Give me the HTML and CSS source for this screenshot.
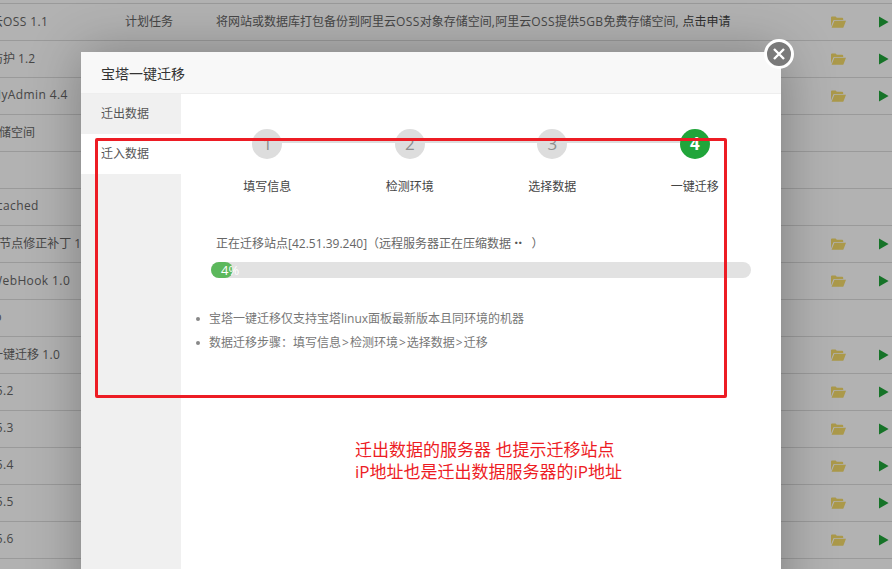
FILE: index.html
```html
<!DOCTYPE html>
<html lang="zh-CN">
<head>
<meta charset="utf-8">
<title>宝塔一键迁移</title>
<link rel="stylesheet" href="styles.css">
</head>
<body>
<svg class="defs" width="0" height="0" aria-hidden="true">
  <symbol id="folder" viewBox="0 0 15 12">
    <path d="M0 10.5V1.6Q0 .6 1 .6H4.6L5.8 1.8H11.2Q12.2 1.8 12.2 2.8V4H3.2Q2.6 4 2.3 4.6Z"/>
    <path d="M3.4 4.8H15L12.4 11.4Q12.2 11.8 11.7 11.8H.6Z"/>
  </symbol>
  <symbol id="play" viewBox="0 0 10 12">
    <path d="M0 .4 9.6 6 0 11.6Z"/>
  </symbol>
</svg>
<main class="page">
  <div class="list">
    <div class="row"><span>阿里云<b class="lat">OSS 1.1</b></span><span class="cell">计划任务</span><span class="cell">将网站或数据库打包备份到阿里云<b class="lat">OSS</b>对象存储空间<b class="lat">,</b>阿里云<b class="lat">OSS</b>提供<b class="lat">5GB</b>免费存储空间<b class="lat">, </b><a class="apply">点击申请</a></span><svg class="folder"><use href="#folder"/></svg><svg class="play"><use href="#play"/></svg></div>
    <div class="row"><span>网站防护 1.2</span><span></span><span></span><svg class="folder"><use href="#folder"/></svg><svg class="play"><use href="#play"/></svg></div>
    <div class="row"><span><b class="lat">phpMyAdmin 4.4</b></span><span></span><span></span><svg class="folder"><use href="#folder"/></svg><svg class="play"><use href="#play"/></svg></div>
    <div class="row"><span>FTP存储空间</span></div>
    <div class="row"></div>
    <div class="row"><span><b class="lat">Memcached</b></span></div>
    <div class="row"><span>Nginx节点修正补丁 1.0</span><span></span><span></span><svg class="folder"><use href="#folder"/></svg><svg class="play"><use href="#play"/></svg></div>
    <div class="row"><span>宝塔<b class="lat">WebHook 1.0</b></span><span></span><span></span><svg class="folder"><use href="#folder"/></svg><svg class="play"><use href="#play"/></svg></div>
    <div class="row"><span>Dump</span></div>
    <div class="row"><span>宝塔一键迁移 <b class="lat">1.0</b></span><span></span><span></span><svg class="folder"><use href="#folder"/></svg><svg class="play"><use href="#play"/></svg></div>
    <div class="row"><span><b class="lat">PHP-5.2</b></span><span></span><span></span><svg class="folder"><use href="#folder"/></svg><svg class="play"><use href="#play"/></svg></div>
    <div class="row"><span><b class="lat">PHP-5.3</b></span><span></span><span></span><svg class="folder"><use href="#folder"/></svg><svg class="play"><use href="#play"/></svg></div>
    <div class="row"><span><b class="lat">PHP-5.4</b></span><span></span><span></span><svg class="folder"><use href="#folder"/></svg><svg class="play"><use href="#play"/></svg></div>
    <div class="row"><span><b class="lat">PHP-5.5</b></span><span></span><span></span><svg class="folder"><use href="#folder"/></svg><svg class="play"><use href="#play"/></svg></div>
    <div class="row"><span><b class="lat">PHP-5.6</b></span><span></span><span></span><svg class="folder"><use href="#folder"/></svg><svg class="play"><use href="#play"/></svg></div>
    <div class="row"></div>
  </div>

  <div class="shade"></div>

  <section class="modal">
    <header class="modal-title">宝塔一键迁移</header>
    <div class="modal-body">
      <nav class="side">
        <div class="side-item">迁出数据</div>
        <div class="side-item active">迁入数据</div>
      </nav>
      <div class="content">
        <ol class="steps">
          <li class="step"><span class="num">1</span><span class="label">填写信息</span></li>
          <li class="step"><span class="num">2</span><span class="label">检测环境</span></li>
          <li class="step"><span class="num">3</span><span class="label">选择数据</span></li>
          <li class="step current"><span class="num">4</span><span class="label">一键迁移</span></li>
        </ol>
        <p class="status">正在迁移站点[42.51.39.240]（远程服务器正在压缩数据 <b class="dots">··</b>&nbsp;&nbsp;&nbsp;）</p>
        <div class="bar"><div class="fill" style="width:4%">4%</div></div>
        <ul class="tips">
          <li>宝塔一键迁移仅支持宝塔linux面板最新版本且同环境的机器</li>
          <li>数据迁移步骤：填写信息<b class="gt">&gt;</b>检测环境<b class="gt">&gt;</b>选择数据<b class="gt">&gt;</b>迁移</li>
        </ul>
      </div>
    </div>
  </section>

  <button class="close" aria-label="关闭">
    <svg width="14" height="14" viewBox="0 0 14 14"><path d="M2 2 12 12M12 2 2 12"/></svg>
  </button>

  <div class="mark-box"></div>
  <p class="mark-note">迁出数据的服务器 也提示迁移站点<br>iP地址也是迁出数据服务器的iP地址</p>
</main>
</body>
</html>
```
FILE: styles.css
```css
* { box-sizing: border-box; }
html, body { margin: 0; padding: 0; }
body {
  font-family: "Open Sans", "Noto Sans CJK SC", sans-serif;
  font-size: 12px;
  color: #666;
  background: #fff;
  text-spacing-trim: space-all;
}
b { font-weight: 400; }
.defs { position: absolute; }
.page {
  position: relative;
  width: 892px;
  height: 569px;
  overflow: hidden;
  padding-top: 3px;
}
.list { margin-left: -33px; width: 925px; }
.row {
  display: grid;
  grid-template-columns: 158px 91px 615px 48px 13px;
  align-items: center;
  height: 37px;
  border-top: 1px solid #ddd;
  white-space: nowrap;
}
.row > span:first-child { padding-bottom: 3px; }
.cell { padding-bottom: 2px; }
.lat { letter-spacing: .4px; }
.apply { color: #444; }
.folder { width: 15px; height: 12px; fill: #f5db6a; }
.play { width: 10px; height: 12px; fill: #20a53a; }

.shade {
  position: absolute;
  inset: 0;
  background: rgba(0, 0, 0, .3);
}
.modal {
  position: absolute;
  left: 81px;
  top: 52px;
  width: 700px;
  height: 560px;
  background: #fff;
  box-shadow: 1px 1px 50px rgba(0, 0, 0, .3);
  display: flex;
  flex-direction: column;
}
.modal-title {
  height: 42px;
  flex: none;
  padding-left: 20px;
  line-height: 43px;
  font-size: 14px;
  color: #333;
  background: #f8f8f8;
  border-bottom: 1px solid #eee;
}
.modal-body { flex: 1; display: flex; }
.side { width: 100px; flex: none; background: #f0f0f0; }
.side-item {
  height: 40px;
  line-height: 39px;
  padding-left: 20px;
  color: #555;
}
.side-item.active { background: #fff; }
.content { flex: 1; }
.steps {
  list-style: none;
  margin: 0;
  padding: 35px 15px 0;
  display: grid;
  grid-template-columns: repeat(4, 1fr);
}
.step {
  position: relative;
  display: flex;
  flex-direction: column;
  align-items: center;
}
.step::before {
  content: "";
  position: absolute;
  top: 11px;
  left: 0;
  right: 0;
  height: 3px;
  background: #ddd;
}
.step:first-child::before { left: 50%; }
.step:last-child::before { right: 50%; }
.num {
  position: relative;
  width: 30px;
  height: 30px;
  border-radius: 50%;
  background: #ddd;
  color: #8f8f8f;
  font-size: 17px;
  line-height: 30px;
  text-align: center;
}
.current .num { background: #20a53a; color: #fff; font-weight: 700; }
.label {
  margin-top: 18px;
  line-height: 20px;
  color: #444;
}
.status {
  margin: 36px 0 8px;
  padding-left: 35px;
  line-height: 20px;
  color: #666;
}
.dots { font-weight: 700; font-size: 14px; color: #555; }
.bar {
  margin-left: 30px;
  width: 540px;
  height: 16px;
  border-radius: 8px;
  background: #e2e2e2;
}
.fill {
  height: 16px;
  border-radius: 8px;
  background: #5cb85c;
  color: #fff;
  font-size: 13px;
  line-height: 16px;
  padding-left: 10px;
  white-space: nowrap;
}
.tips {
  list-style: none;
  margin: 29px 0 0;
  padding-left: 28px;
  color: #777;
}
.tips li { position: relative; line-height: 24px; }
.tips li::before {
  content: "";
  position: absolute;
  left: -13px;
  top: 10px;
  width: 4px;
  height: 4px;
  border-radius: 50%;
  background: #888;
}
.gt { margin: 0 1px; }

.close {
  position: absolute;
  left: 764px;
  top: 39px;
  width: 30px;
  height: 30px;
  padding: 0;
  border: 3px solid #fff;
  border-radius: 50%;
  background: #7a7a7a;
  display: flex;
  align-items: center;
  justify-content: center;
}
.close path { stroke: #fff; stroke-width: 2.4; fill: none; }
.mark-box {
  position: absolute;
  left: 95px;
  top: 138px;
  width: 632px;
  height: 260px;
  border: 3px solid #ed1c24;
  border-radius: 2px;
}
.mark-note {
  position: absolute;
  left: 355px;
  top: 439px;
  margin: 0;
  font-size: 17px;
  line-height: 22px;
  color: #ed1c24;
  white-space: nowrap;
}
```
